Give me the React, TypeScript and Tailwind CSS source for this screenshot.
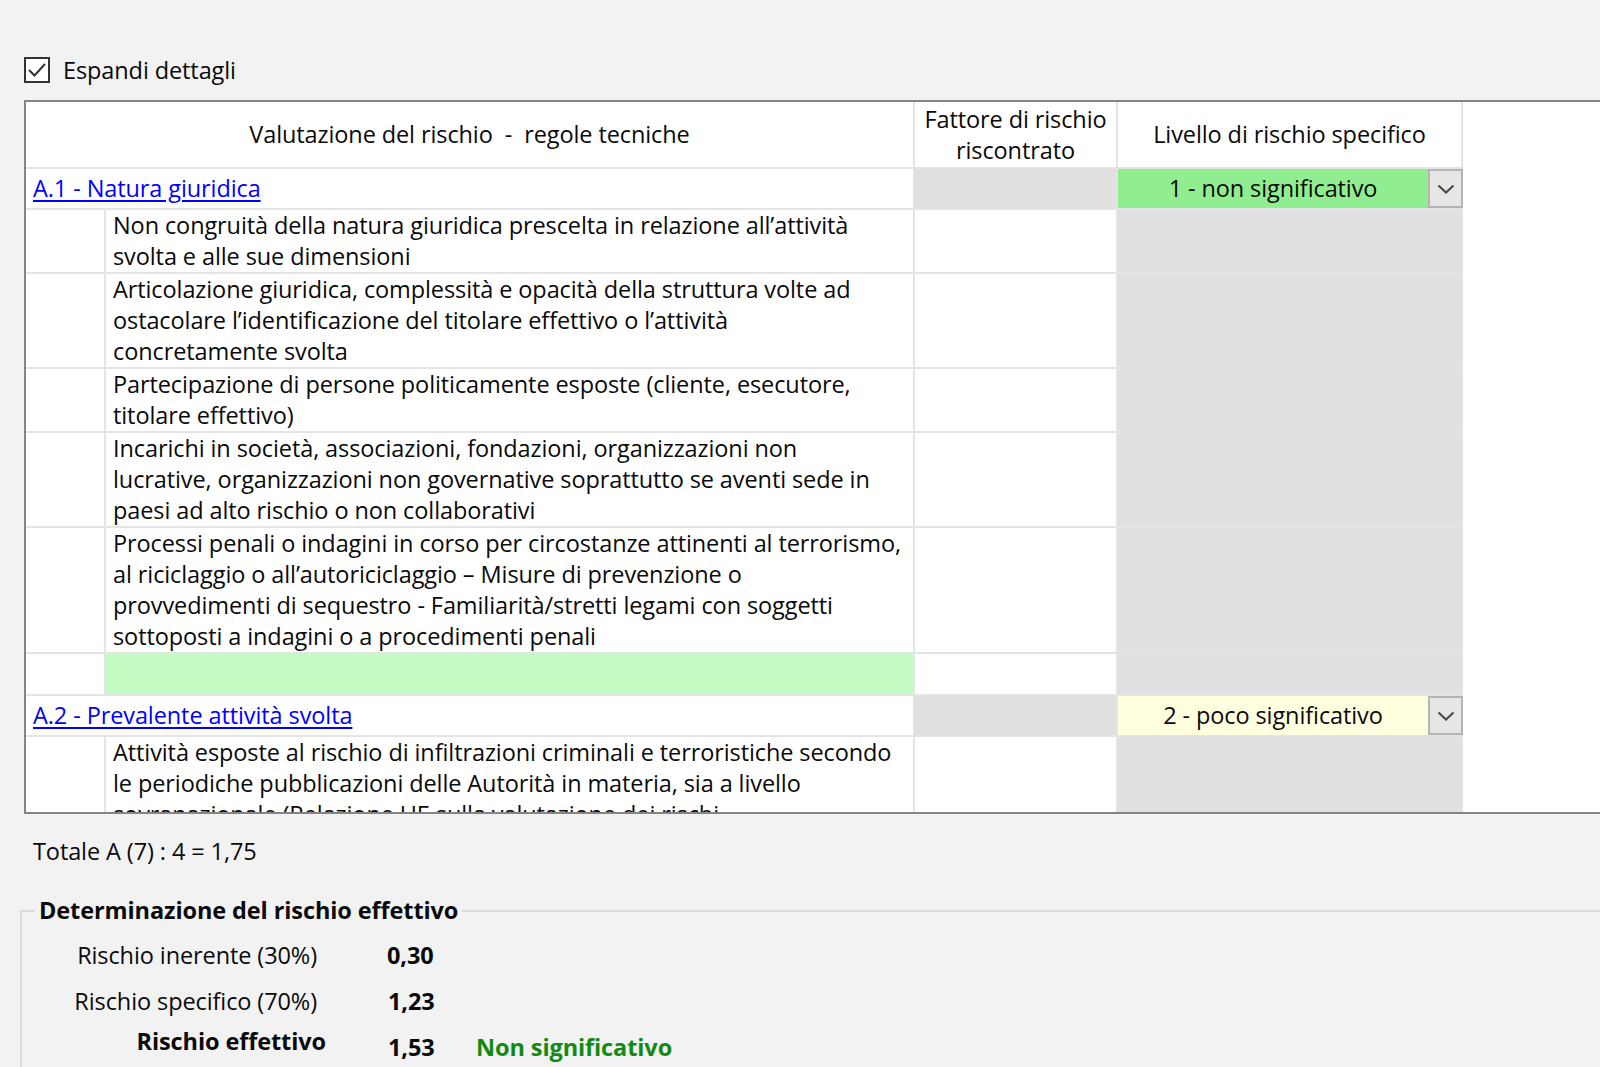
import { ReactNode } from 'react'

const items = [
  {
    lines: ["Non congruità della natura giuridica prescelta in relazione all’attività", 'svolta e alle sue dimensioni']
  },
  {
    lines: [
      'Articolazione giuridica, complessità e opacità della struttura volte ad',
      'ostacolare l’identificazione del titolare effettivo o l’attività',
      'concretamente svolta'
    ]
  },
  {
    lines: ['Partecipazione di persone politicamente esposte (cliente, esecutore,', 'titolare effettivo)']
  },
  {
    lines: [
      'Incarichi in società, associazioni, fondazioni, organizzazioni non',
      'lucrative, organizzazioni non governative soprattutto se aventi sede in',
      'paesi ad alto rischio o non collaborativi'
    ]
  },
  {
    lines: [
      'Processi penali o indagini in corso per circostanze attinenti al terrorismo,',
      'al riciclaggio o all’autoriciclaggio – Misure di prevenzione o',
      'provvedimenti di sequestro - Familiarità/stretti legami con soggetti',
      'sottoposti a indagini o a procedimenti penali'
    ]
  }
]

const cell = 'border-r-2 border-b-2 border-[#e4e4e4]'

function Chevron() {
  return (
    <svg width="18" height="10" viewBox="0 0 18 10" fill="none">
      <polyline points="1.5,1.5 9,8.5 16.5,1.5" stroke="#4a4a4a" strokeWidth="2.2" />
    </svg>
  )
}

function Combo({ value, color }: { value: string; color: string }) {
  return (
    <div className={`${cell} flex`}>
      <div className={`flex-1 flex items-center justify-center ${color}`}>{value}</div>
      <div className="w-[35px] -mr-[2px] border-2 border-[#b4b4b4] bg-[#e6e6e6] flex items-center justify-center">
        <Chevron />
      </div>
    </div>
  )
}

function SectionRow({ title, value, color }: { title: string; value: string; color: string }) {
  return (
    <>
      <div className={`${cell} col-span-2 pl-[7px] leading-[31px] py-[4px]`}>
        <span className="text-[#0000ff] underline underline-offset-[3px]">{title}</span>
      </div>
      <div className={`${cell} bg-[#e0e0e0]`} />
      <Combo value={value} color={color} />
      <div />
    </>
  )
}

function ItemRow({ children, green }: { children?: ReactNode; green?: boolean }) {
  return (
    <>
      <div className={cell} />
      <div className={`${cell} pl-[7px] leading-[31px] whitespace-nowrap ${green ? 'bg-[#c3fbc3] min-h-[42px]' : ''}`}>
        {children}
      </div>
      <div className={cell} />
      <div className={`${cell} bg-[#e0e0e0]`} />
      <div />
    </>
  )
}

export default function App() {
  return (
    <div className="w-[1600px] h-[1067px] overflow-hidden bg-[#f2f2f2] text-[#0a0a0a] font-['Open_Sans',sans-serif] text-[23.5px] tracking-[-0.1px]">
      <div className="pt-[57px] pl-[24px] flex items-center gap-[13px] h-[83px]">
        <div className="w-[26px] h-[26px] border-2 border-[#333] bg-white flex items-center justify-center">
          <svg width="20" height="18" viewBox="0 0 20 18" fill="none">
            <polyline points="2,9 7.5,14.5 18,3" stroke="#333" strokeWidth="2" />
          </svg>
        </div>
        <span className="leading-[31px]">Espandi dettagli</span>
      </div>

      <div className="mt-[17px] ml-[24px] w-[1600px] h-[714px] overflow-hidden border-2 border-r-0 border-[#858585] bg-white">
        <div className="grid grid-cols-[80px_809px_203px_345px_1fr]">
          <div className={`${cell} col-span-2 h-[67px] flex items-center justify-center whitespace-pre`}>
            Valutazione del rischio  -  regole tecniche
          </div>
          <div className={`${cell} flex items-center justify-center text-center leading-[31px]`}>
            Fattore di rischio
            <br />
            riscontrato
          </div>
          <div className={`${cell} flex items-center justify-center`}>Livello di rischio specifico</div>
          <div />

          <SectionRow title="A.1 - Natura giuridica" value="1 - non significativo" color="bg-[#90ee90]" />
          {items.map((item, i) => (
            <ItemRow key={i}>
              {item.lines.map((l, j) => (
                <div key={j}>{l}</div>
              ))}
            </ItemRow>
          ))}
          <ItemRow green />

          <SectionRow title="A.2 - Prevalente attività svolta" value="2 - poco significativo" color="bg-[#ffffe0]" />
          <ItemRow>
            <div>Attività esposte al rischio di infiltrazioni criminali e terroristiche secondo</div>
            <div>le periodiche pubblicazioni delle Autorità in materia, sia a livello</div>
            <div>sovranazionale (Relazione UE sulla valutazione dei rischi</div>
          </ItemRow>
        </div>
      </div>

      <div className="mt-[22px] pl-[33px] leading-[31px]">Totale A (7) : 4 = 1,75</div>

      <fieldset className="mt-[28px] ml-[20px] border-t-2 border-l-2 border-[#dcdcdc] h-[200px]">
        <legend className="ml-[13px] px-[4px] font-bold leading-[31px]">Determinazione del rischio effettivo</legend>
        <div className="flex items-center leading-[31px] mt-[14px]">
          <div className="w-[295px] text-right">Rischio inerente (30%)</div>
          <div className="ml-[70px] font-bold">0,30</div>
        </div>
        <div className="flex items-center leading-[31px] mt-[15px]">
          <div className="w-[295px] text-right">Rischio specifico (70%)</div>
          <div className="ml-[71px] font-bold">1,23</div>
        </div>
        <div className="flex items-start leading-[31px] mt-[9px]">
          <div className="w-[304px] text-right font-bold">Rischio effettivo</div>
          <div className="ml-[62px] mt-[6px] font-bold w-[88px]">1,53</div>
          <div className="mt-[6px] font-bold text-[#118a11]">Non significativo</div>
        </div>
      </fieldset>
    </div>
  )
}
